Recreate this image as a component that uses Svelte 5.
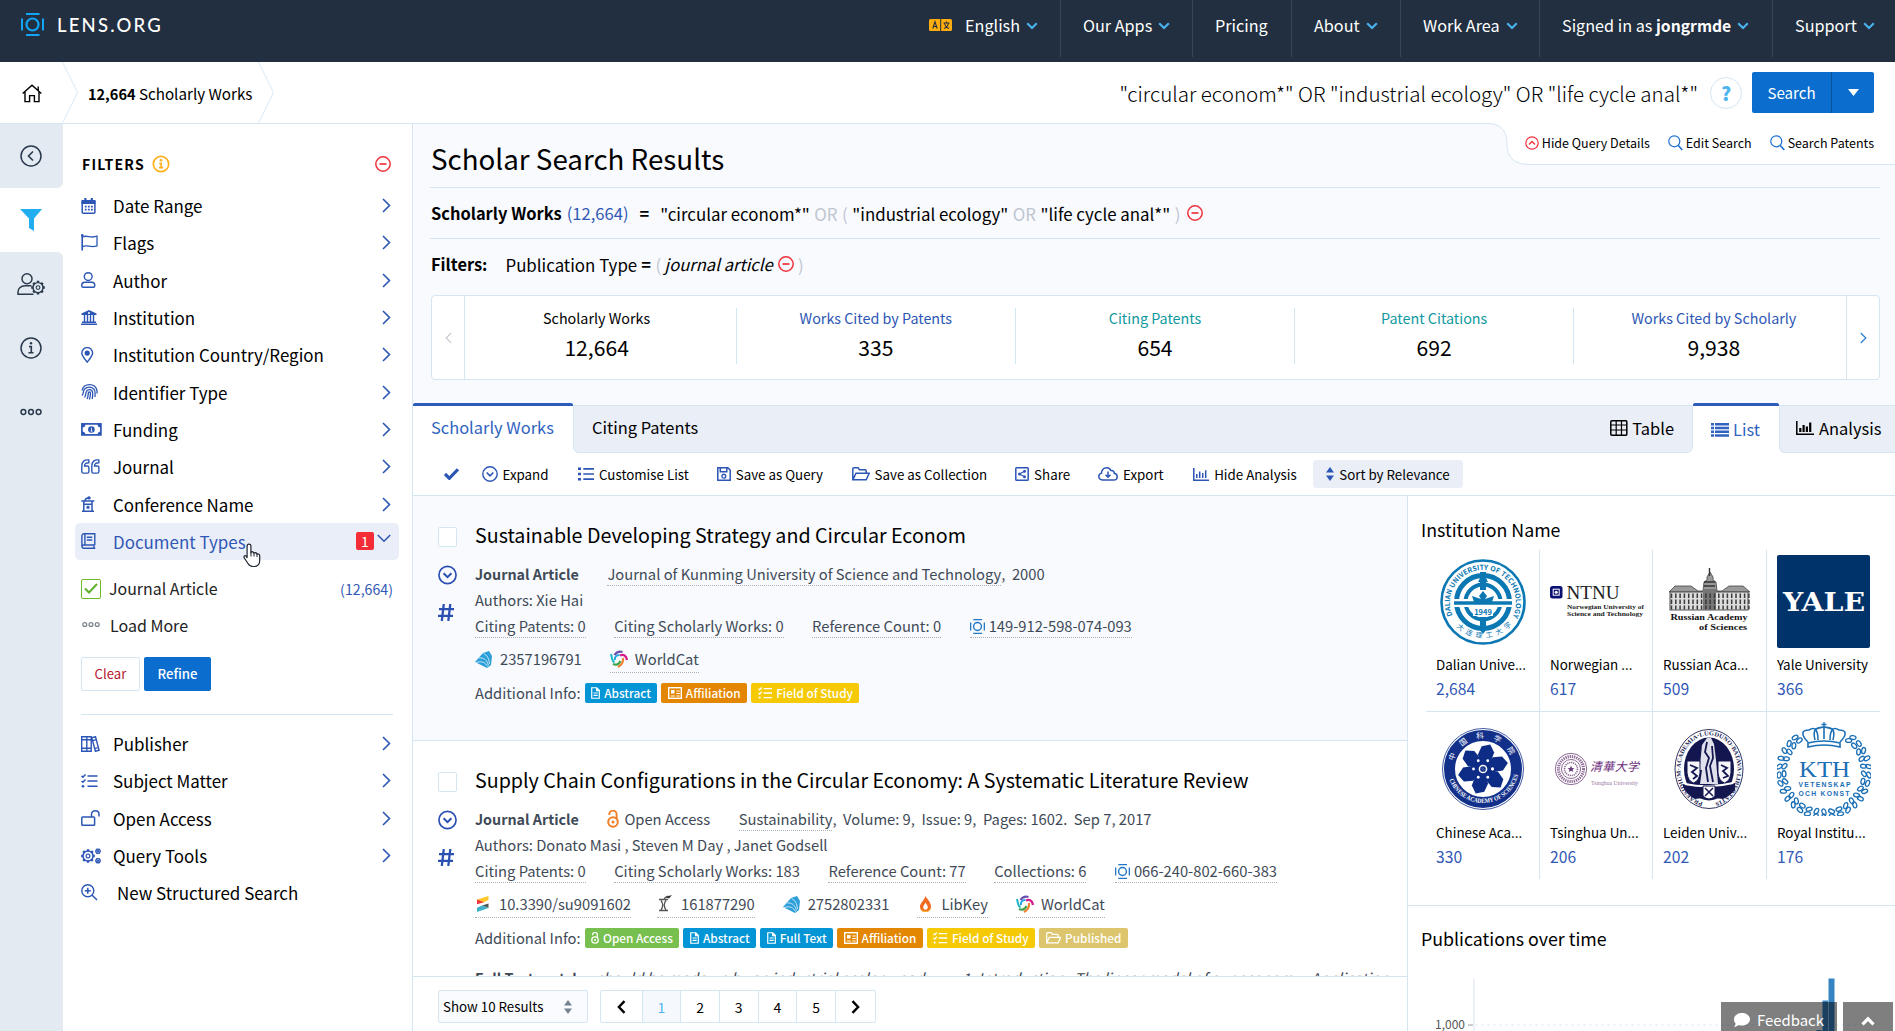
<script>
  // Icon bodies: [viewBox size, markup]. Strokes use currentColor.
  const gear = (cx, cy, r, n, sw = 1.3) => {
    let d = '';
    for (let i = 0; i < n; i++) {
      const a = (i / n) * Math.PI * 2;
      d += `M${cx + Math.cos(a) * r} ${cy + Math.sin(a) * r}L${cx + Math.cos(a) * (r + r * 0.36)} ${cy + Math.sin(a) * (r + r * 0.36)}`;
    }
    return `<path d="${d}" stroke-width="${r * 0.5}"/><circle cx="${cx}" cy="${cy}" r="${r}" stroke-width="${sw}"/><circle cx="${cx}" cy="${cy}" r="${r * 0.38}" stroke-width="${sw * 0.8}"/>`;
  };
  const F = 'fill="currentColor" stroke="none"';
  const icons = {
    lens: ['23 23', `<circle cx="11.5" cy="11.5" r="6" stroke-width="2.2"/><path d="M5 1.1h13.5M5 21.9h13.5M1 5.500v12M22 5.500v12" stroke-width="2"/>`],
    home: ['20 19', `<path d="M.7 9.600L10 1.200l9.300 8.400M3 8v9.600h4.600v-6h4.800v6H17V8M16.200 6.200V2.600" stroke-width="1.400"/>`],
    back: ['22 22', `<circle cx="11" cy="11" r="10"/><path d="M13 6.500L8.500 11l4.500 4.500" stroke-width="1.600"/>`],
    funnel: ['22 22', `<path ${F} d="M0 0h22l-8 9.500V22l-5-3V9.500z"/>`],
    usercog: ['28 22', `<circle cx="10" cy="5.800" r="5"/><path d="M14.500 12.800H8c-4 0-7 2.600-7 6.200v2.200h15.500"/>${gear(21, 14.6, 5, 8, 1.4)}`],
    info: ['22 22', `<circle cx="11" cy="11" r="10"/><path d="M9 9.600h2.300v6M8.500 15.800h5" stroke-width="1.600"/><circle ${F} cx="11" cy="6.300" r="1.200"/>`],
    dots: ['22 8', `<circle cx="3.400" cy="4" r="2.400"/><circle cx="11" cy="4" r="2.400"/><circle cx="18.600" cy="4" r="2.400"/>`],
    infobold: ['18 18', `<circle cx="9" cy="9" r="7.700" stroke-width="1.700"/><path d="M7.300 8.300h1.900v4M7 12.700h4.200" stroke-width="1.700"/><circle ${F} cx="9" cy="5.300" r="1.300"/>`],
    minus: ['16 16', `<circle cx="8" cy="8" r="7.200" stroke-width="1.500"/><path d="M4.500 8h7" stroke-width="1.700"/>`],
    calendar: ['16 16', `<path ${F} d="M.5 2h14v4H.5zM3.300 0h2.200v3H3.300zM9.700 0h2.200v3H9.700z"/><rect x="1.200" y="2.700" width="12.700" height="12.500" rx="1" stroke-width="1.500"/><path d="M3.800 8.700h8M3.800 11.600h8" stroke-width="1.800" stroke-dasharray="1.800 1.300"/>`],
    flag: ['17 17', `<path d="M1.200.5V16.500" stroke-width="1.600"/><circle ${F} cx="1.300" cy="1.400" r="1.300"/><path d="M1.500 3c5-2.500 7.500 1.800 14.500-.8v9.600c-7 2.600-9.500-1.700-14.500.8" stroke-width="1.300"/>`],
    user: ['15 16', `<circle cx="7.200" cy="4.600" r="3.900" stroke-width="1.400"/><path d="M3.600 10.200h7.200c2 0 3 1.400 3 3.300 0 1-.5 1.800-1.300 1.800H2c-.8 0-1.300-.8-1.300-1.800 0-1.900 1-3.300 2.900-3.300z" stroke-width="1.400"/>`],
    bank: ['16 15', `<path ${F} d="M8 0l7.500 3.500V5H.5V3.500zM0 13.500h16V15H0z"/><path d="M3.500 5v7M6.500 5v7M9.500 5v7M12.500 5v7M1 12.300h14" stroke-width="1.400"/><circle cx="8" cy="3" r="1" fill="#fff" stroke="none"/>`],
    pin: ['13 16', `<path d="M6.200 15.200C3.500 11.500.8 9 .8 6a5.400 5.400 0 0 1 10.800 0c0 3-2.700 5.500-5.400 9.200z" stroke-width="1.400"/><circle ${F} cx="6.200" cy="6.100" r="2.600"/>`],
    finger: ['17 16', `<path d="M1 6.500C2 2.500 5 .7 8.500.7S15 2.500 16 6.500v3M1 11.500c1.500-1 1-4.500 2.500-6.300C6 2.500 11 2.500 13.200 5.500c1 1.500 1 5 .8 7.500M3.500 13.500C5 12 4.600 9.500 5.200 8c1-3 5.500-3.200 6.300 0 .4 1.800.3 4.500-.3 7M6 15c1.400-2 1-4.500 1.400-6.200.4-1.200 1.900-1.200 2 .1.200 2.300-.2 4.600-1 6.700" stroke-width="1.300"/>`],
    money: ['21 13', `<rect x=".9" y=".9" width="19" height="11" stroke-width="1.700"/><path ${F} d="M1 1h3.500A3.500 3.500 0 0 1 1 4.500zM20 1v3.500A3.500 3.500 0 0 1 16.500 1zM1 12V8.500A3.500 3.500 0 0 1 4.500 12zM20 12h-3.500A3.500 3.500 0 0 1 20 8.500z"/><circle ${F} cx="10.400" cy="6.500" r="3.300"/><path d="M10.500 4.800v3.400M9.600 8.200h1.900" stroke="#fff" stroke-width=".8"/>`],
    quote: ['19 15', `<path d="M7.800 1C3.500.5.8 2.500.8 7v5.500c0 1 .5 1.600 1.500 1.600h4c1 0 1.600-.6 1.600-1.600V8.600c0-1-.6-1.600-1.600-1.600H3.500C3.500 4.800 5 3.700 7.800 3.800zM17.800 1c-4.300-.5-7 1.500-7 6v5.500c0 1 .5 1.600 1.500 1.600h4c1 0 1.600-.6 1.600-1.600V8.600c0-1-.6-1.600-1.600-1.600h-2.800c0-2.200 1.500-3.300 4.300-3.200z" stroke-width="1.400"/>`],
    podium: ['14 16', `<path d="M.3 4.900h13M2.800 5v9.500M11 5v9.500M1 15.200h12M3 8.300h8M4 4.500C4.300 2.600 5.500 2 7.500 2" stroke-width="1.500"/><circle ${F} cx="8" cy="1.900" r="1.700"/><path ${F} d="M7 9l.8 1.400 1.500.2-1.100 1.100.3 1.500L7 12.500l-1.500.7.300-1.500-1.100-1.100 1.500-.2z"/>`],
    book: ['15 16', `<path d="M13.800 12V.8H3C1.700.8.900 1.600.900 3v10c0 1.300.8 2.200 2.100 2.200h11.300M1 13.500C1 12.500 2 12 3 12h10.800M13 12v3M3.900 1v11M5.800 4.300h5.500M5.800 7h5.500" stroke-width="1.400"/>`],
    books: ['19 16', `<path d="M.7.8h5.100v14.400H.700zM5.800.8h4.400v14.400H5.800zM1 3.800h9M1 12.200h9M10.800 1.700l3.700-1 3.600 13.600-3.700 1zM11.600 4.600l3.700-1M14 12.400l3.700-1" stroke-width="1.400"/>`],
    tasks: ['17 14', `<path d="M.6 1.900l1.300 1.300L4.500.5M.6 7l1.300 1.300 2.600-2.700M6.500 2h10M6.500 7h10M6.500 12.300h10" stroke-width="1.500"/><circle ${F} cx="2" cy="12.300" r="1.300"/>`],
    unlock: ['19 16', `<rect x=".8" y="7" width="12.800" height="8.200" rx=".8" stroke-width="1.500"/><path d="M10.500 7V4.300C10.500 2.200 12 .8 14.200.8S18 2.200 18 4.300V6.500" stroke-width="1.500"/>`],
    cogs: ['21 16', `${gear(7, 8, 5, 8, 1.5)}${gear(17, 3.3, 2.1, 6, 1.3)}${gear(17, 12.7, 2.1, 6, 1.3)}`],
    zoomin: ['17 17', `<circle cx="6.800" cy="6.800" r="6" stroke-width="1.400"/><path d="M11.200 11.200l4.800 4.800M6.800 3.800v6M3.800 6.800h6" stroke-width="1.500"/>`],
    mag: ['15 16', `<circle cx="6.300" cy="6.300" r="5.500" stroke-width="1.200"/><path d="M10.300 10.500l4 4.500" stroke-width="1.600"/>`],
    upcirc: ['14 14', `<circle cx="7" cy="7" r="6.200" stroke-width="1.200"/><path d="M4 8.500l3-3 3 3" stroke-width="1.400"/>`],
    right: ['9 15', `<path d="M1 1l6.500 6.500L1 14" stroke-width="1.600"/>`],
    left: ['9 15', `<path d="M8 1L1.500 7.500 8 14" stroke-width="1.500"/>`],
    down: ['14 9', `<path d="M.8 1l6.200 6.200L13.200 1" stroke-width="1.600"/>`],
    navdown: ['12 8', `<path d="M1.200 1.200L6 6l4.800-4.800" stroke-width="2.100"/>`],
    check: ['15 12', `<path d="M1 6l4.300 4.300L14 1.300" stroke-width="3.200"/>`],
    expand: ['16 16', `<circle cx="8" cy="8" r="7.200" stroke-width="1.400"/><path d="M4.700 6.500L8 9.800l3.300-3.300" stroke-width="1.700"/>`],
    listdots: ['16 14', `<path d="M0 1.800h3M0 7h3M0 12.200h3" stroke-width="2.600"/><path d="M5.300 1.800H16M5.300 7H16M5.300 12.200H16" stroke-width="1.700"/>`],
    save: ['14 14', `<path d="M.8.800h10l2.400 2.200v10.200H.8zM3.300 1v3.800h6.500V1" stroke-width="1.500"/><circle cx="6.800" cy="9.200" r="1.900" stroke-width="1.400"/>`],
    folder: ['18 14', `<path d="M.8 12.500V2c0-.7.400-1.200 1.200-1.200h4l1.500 2H13c.8 0 1.200.5 1.200 1.200v2M.8 12.800L4 6.200h13.200l-3 6.600z" stroke-width="1.500"/>`],
    share: ['14 14', `<rect x=".8" y=".8" width="12.400" height="12.400" rx=".8" stroke-width="1.500"/><path d="M9.500 4.300L4.500 7l5 2.700" stroke-width="1.100"/><circle ${F} cx="9.500" cy="4.300" r="1.500"/><circle ${F} cx="4.500" cy="7" r="1.500"/><circle ${F} cx="9.500" cy="9.700" r="1.500"/>`],
    cloud: ['20 14', `<path d="M5 13C2.500 13 .8 11.500.8 9.500c0-1.800 1.200-3 2.700-3.400C3.500 3 5.800.8 8.500.8c2.200 0 3.600 1 4.300 2.700C15 3.200 16.300 4.600 16.300 6.300 18 6.700 19.200 8 19.200 9.700c0 2-1.500 3.300-3.500 3.300zM10 4.500v5.500M7.500 7.800L10 10.300l2.500-2.500" stroke-width="1.500"/>`],
    bars: ['16 13', `<path d="M.8 0v12.200H16" stroke-width="1.500"/><path d="M3.800 10V6M6.700 10V3.500M9.700 10V5M12.700 10V2.200" stroke-width="1.500"/>`],
    barsbold: ['18 14', `<path d="M.8 0v13.200H18" stroke-width="1.500"/><path d="M4.300 11V7M7.600 11V4M10.900 11V5.500M14.200 11V1.500" stroke-width="2.200"/>`],
    sort: ['8 14', `<path ${F} d="M4 0l4 5.500H0zM4 14L0 8.500h8z"/>`],
    table: ['18 16', `<rect x=".8" y=".8" width="16" height="14.400" rx="1" stroke-width="1.500"/><path d="M1 5h16M1 10h16M6.200 1v14M11.500 1v14" stroke-width="1.200"/>`],
    list: ['18 14', `<path d="M0 1.200h3M0 5h3M0 8.800h3M0 12.600h3M4 1.200h14M4 5h14M4 8.800h14M4 12.600h14" stroke-width="2.500"/>`],
    hash: ['16 17', `<path d="M5.800 0L3.800 17M12.300 0l-2 17M1 5.200h15M0 11.800h15" stroke-width="2.300"/>`],
    oa: ['12 18', `<circle cx="6" cy="12" r="4.800" stroke-width="2"/><circle ${F} cx="6" cy="12" r="1.500"/><path d="M2.300 5V4.300a3.600 3.600 0 0 1 7.300 0V9" stroke-width="1.900"/>`],
    doc: ['10 13', `<path d="M.8.8h5.400L9 3.600v8.600H.8zM6 1v3h3M2.700 6.500h4.600M2.700 9h4.600" stroke-width="1.300"/>`],
    card: ['14 12', `<rect x=".7" y=".7" width="12.600" height="10.600" stroke-width="1.400"/><path d="M2.800 9h4M8.300 4h3.500M8.300 6.500h3.500M8.300 9h3.500" stroke-width="1.200"/><path ${F} d="M3 3h3.500v3.500H3z"/>`],
    chat: ['16 14', `<path ${F} d="M8 0c4.500 0 8 2.700 8 6.200s-3.500 6.300-8 6.300c-1.200 0-2.300-.2-3.300-.6C3.500 13 1.800 13.800 0 13.800c.8-.8 1.500-2 1.600-3.200C.6 9.400 0 7.900 0 6.200 0 2.700 3.500 0 8 0z"/>`],
    up: ['14 10', `<path d="M1.500 8.300L7 2.800l5.500 5.500" stroke-width="3.200"/>`],
    pgleft: ['9 14', `<path d="M7.500 1.200L1.900 7l5.600 5.800" stroke-width="2.400"/>`],
    pgright: ['9 14', `<path d="M1.500 1.200L7.100 7l-5.600 5.800" stroke-width="2.400"/>`],
    msacad: ['18 17', `<path fill="#2c9fd9" stroke="none" d="M0 11l8-9 6-2 3 5-1 9-4 3z"/><path stroke="#e8f5fc" stroke-width=".8" d="M1 11.500C7 10 10 11 12.500 15.500M4 7c5-.5 8 2 9.500 7.500M8.500 2.500c3.500 1.500 5.500 5 6 10.500"/>`],
    worldcat: ['18 18', `<path d="M9.500 5C6 5 4.500 7 5 10" stroke="#21a8e0" stroke-width="2"/><path d="M1 4c1 4.500 1 7 3.500 8.500" stroke="#1fb6c8" stroke-width="2"/><path d="M4.500 5C6.500 2 9 1 12.500 2" stroke="#6c4fb0" stroke-width="2.200"/><path d="M10 5.500c3.500-1.500 6.300 0 7 4.500" stroke="#d61c8b" stroke-width="2.200"/><path d="M13 8c.5 4-1.500 7-5 9" stroke="#f08030" stroke-width="2.200"/><path d="M3 14c3 1.500 6 .5 7.500-3" stroke="#3fa54a" stroke-width="2.200"/>`],
    crossref: ['12 16', `<path fill="#ffc72c" stroke="none" d="M0 3.500L11.500 0v4L5 7z"/><path fill="#ef3340" stroke="none" d="M0 3.500v4.800L7 6.300z"/><path fill="#4f5858" stroke="none" d="M11.500 7.500v4.600L5 9.400z"/><path fill="#3eb1c8" stroke="none" d="M0 16v-4.300l5-2.300 6.500 2.700z"/>`],
    core: ['15 17', `<path stroke="#555" stroke-width="1.300" d="M2 4.500h9M2 15.500h9M4 5.500c2 2.500 2 6.500 0 9.500M9 5.500c-2 2.500-2 6.500 0 9.500M7 3.500L11 1"/><path fill="#333" stroke="none" d="M8 2l7-2-3 3.500z"/>`],
    fire: ['11 16', `<path fill="#f06a22" stroke="none" d="M5.500 0C7 3 11 6 11 10.500 11 14 8.500 16 5.500 16S0 14 0 10.500C0 7 4.500 4 5.500 0z"/><path fill="#f9b233" stroke="none" d="M0 11c1 3 3 4 5.500 4S10 14 11 11c0 3.500-2.500 5-5.500 5S0 14.500 0 11z"/><path fill="#fff" stroke="none" d="M5.500 6.500c.8 1.800 2.300 2.800 2.300 4.800 0 1.500-1 2.400-2.300 2.400s-2.300-.9-2.300-2.400c0-2 1.700-3 2.300-4.800z"/>`],
    az: ['23 12', `<rect width="23" height="12" rx="1.500" fill="#fdae0d" stroke="none"/><path d="M11.700 0v12" stroke="#212f40" stroke-width="1"/><path d="M3.800 9.500L6 2.800l2.200 6.700M4.500 7.500h3M14.500 4h6M17.500 2.500V4M19.500 4c-.5 2.500-2 4.500-4.500 5.500M15.500 4c.5 2.500 2 4.500 4.500 5.500" stroke="#212f40" stroke-width="1.100"/>`]
  };

  const nav = [
    { t: 'Our Apps', w: 132, c: true }, { t: 'Pricing', w: 99 }, { t: 'About', w: 109, c: true },
    { t: 'Work Area', w: 139, c: true }, { t: 'Signed in as ', b: 'jongrmde', w: 233, c: true }, { t: 'Support', w: 123, c: true }
  ];
  const filters = [
    ['calendar', 'Date Range'], ['flag', 'Flags'], ['user', 'Author'], ['bank', 'Institution'],
    ['pin', 'Institution Country/Region'], ['finger', 'Identifier Type'], ['money', 'Funding'],
    ['quote', 'Journal'], ['podium', 'Conference Name']
  ];
  const filters2 = [['books', 'Publisher'], ['tasks', 'Subject Matter'], ['unlock', 'Open Access'], ['cogs', 'Query Tools']];
  const stats = [
    ['Scholarly Works', '12,664', ''], ['Works Cited by Patents', '335', 'blue'], ['Citing Patents', '654', 'teal'],
    ['Patent Citations', '692', 'teal'], ['Works Cited by Scholarly', '9,938', 'blue']
  ];
  const tools = [
    ['expand', 'Expand', 22.5], ['listdots', 'Customise List', 29.5], ['save', 'Save as Query', 28], ['folder', 'Save as Collection', 28.5],
    ['share', 'Share', 28], ['cloud', 'Export', 28], ['bars', 'Hide Analysis', 29.5]
  ];
  const tag = { abs: ['doc', 'Abstract', 'tblue'], full: ['doc', 'Full Text', 'tblue'], aff: ['card', 'Affiliation', 'torange'], fos: ['tasks', 'Field of Study', 'tyellow'], oa: ['oa', 'Open Access', 'tgreen'], pub: ['folder', 'Published', 'tgold'] };
  const results = [
    {
      title: 'Sustainable Developing Strategy and Circular Econom', source: 'Journal of Kunming University of Science and Technology', rest: ',  2000',
      authors: 'Authors: Xie Hai', counts: ['Citing Patents: 0', 'Citing Scholarly Works: 0', 'Reference Count: 0'], id: '149-912-598-074-093',
      ids: [['msacad', '2357196791', false], ['worldcat', 'WorldCat', true]], tags: [tag.abs, tag.aff, tag.fos]
    },
    {
      title: 'Supply Chain Configurations in the Circular Economy: A Systematic Literature Review', oa: true, source: 'Sustainability', rest: ',  Volume: 9,  Issue: 9,  Pages: 1602.  Sep 7, 2017',
      authors: 'Authors: Donato Masi , Steven M Day , Janet Godsell', counts: ['Citing Patents: 0', 'Citing Scholarly Works: 183', 'Reference Count: 77', 'Collections: 6'], id: '066-240-802-660-383',
      ids: [['crossref', '10.3390/su9091602', true], ['core', '161877290', true], ['msacad', '2752802331', false], ['fire', 'LibKey', true], ['worldcat', 'WorldCat', true]],
      tags: [tag.oa, tag.abs, tag.full, tag.aff, tag.fos, tag.pub], match: true
    }
  ];
  const insts = [
    ['dalian', 'Dalian Unive...', '2,684'], ['ntnu', 'Norwegian ...', '617'], ['ras', 'Russian Aca...', '509'], ['yale', 'Yale University', '366'],
    ['cas', 'Chinese Aca...', '330'], ['tsinghua', 'Tsinghua Un...', '206'], ['leiden', 'Leiden Univ...', '202'], ['kth', 'Royal Institu...', '176']
  ];
  const ring = (n, r, cx, cy, from = 0, to = 360) => Array.from({ length: n }, (_, i) => {
    const a = ((from + ((to - from) * i) / (n - 1)) * Math.PI) / 180;
    return [cx + Math.cos(a) * r, cy + Math.sin(a) * r];
  });
  const wreath = [...ring(27, 40, 47, 50, -52, 232), ...ring(27, 45, 47, 50, -50, 230)];
  const windows = Array.from({ length: 19 }, (_, i) => 8.5 + i * 4.3);
</script>

{#snippet icon(name, cls = '')}
  {@const [w, h] = icons[name][0].split(' ')}
  <svg class="ico {cls}" width={w} height={h} viewBox="0 0 {w} {h}" fill="none" stroke="currentColor" stroke-width="1.5">{@html icons[name][1]}</svg>
{/snippet}

{#snippet logo(k)}
  <svg class="logo" width="94" height="94" viewBox="0 0 94 94">
    {#if k === 'dalian'}
      <g fill="none" stroke="#0b78b3">
        <circle cx="47" cy="47" r="41.500" stroke-width="2.600" />
        <circle cx="47" cy="47" r="26.500" stroke-width="5" />
        <circle cx="47" cy="47" r="17.500" stroke-width="4" />
        <path d="M42 27l5-10 5 10zM41 71l6 8 6-8z" fill="#0b78b3" stroke="none" />
        <path d="M18 48h58" stroke="#fff" stroke-width="8" />
        <path d="M18 48h58" stroke-width="3.500" />
        <path d="M47 17v18M47 62v12" stroke-width="6" />
      </g>
      <rect x="37" y="51" width="20" height="10" fill="#fff" />
      <path d="M47 36l4 5-2 3 6-2 3-1-2 6-6 2h-6l-6-2-2-6 3 1 6 2-2-3z" fill="#0b78b3" />
      <text x="47" y="59.500" class="lt" font-size="7.500" font-weight="700" fill="#0b78b3" text-anchor="middle">1949</text>
      <path id="p-dal" d="M16.500 60.500A33 33 0 1 1 77.500 60.500" fill="none" />
      <text class="lt" font-size="7" font-weight="700" fill="#0b78b3"><textPath href="#p-dal" textLength="131" lengthAdjust="spacing">DALIAN UNIVERSITY OF TECHNOLOGY</textPath></text>
      <path id="p-dal2" d="M17 68A37.500 37.500 0 0 0 77 68" fill="none" />
      <text class="lt" font-size="7" fill="#0b78b3"><textPath href="#p-dal2" startOffset="5" textLength="62">大连理工大学</textPath></text>
    {:else if k === 'ntnu'}
      <rect x="0" y="31" width="12.500" height="12.500" rx="2.500" fill="#0a1172" />
      <rect x="3.200" y="34.200" width="6" height="6" fill="none" stroke="#fff" stroke-width="1" />
      <circle cx="6.200" cy="37.200" r="1.500" fill="#fff" />
      <g class="serif" fill="#222">
        <text x="16.500" y="43.500" font-size="18" textLength="53" lengthAdjust="spacingAndGlyphs">NTNU</text>
        <text x="17" y="53.500" font-size="6.800" font-weight="700" textLength="77" lengthAdjust="spacingAndGlyphs">Norwegian University of</text>
        <text x="17" y="61" font-size="6.800" font-weight="700" textLength="76" lengthAdjust="spacingAndGlyphs">Science and Technology</text>
      </g>
    {:else if k === 'ras'}
      <path d="M6 37l6-6h16l7 5h5l1-9 3-2v-3l3-5 3 5v3l3 2 1 9h5l7-5h14l7 6z" fill="#9a9a9a" stroke="#444" stroke-width=".8" />
      <rect x="7" y="37" width="78" height="18" fill="#ddd" stroke="#444" stroke-width=".9" />
      <path d="M46.500 13v8M41 27h11M41 31h11" stroke="#333" stroke-width="1.400" />
      <rect x="40" y="34" width="13" height="21" fill="#777" />
      <g stroke="#3a3a3a" stroke-width="1.500">
        {#each windows as x}<path d="M{x} 38.500v4.500M{x} 44.500v4.500M{x} 50.500v4" />{/each}
      </g>
      <g class="serif" fill="#111" font-weight="700" text-anchor="end" font-size="8.500">
        <text x="84.500" y="64.500" textLength="77" lengthAdjust="spacingAndGlyphs">Russian Academy</text>
        <text x="84" y="74.500" textLength="48" lengthAdjust="spacingAndGlyphs">of Sciences</text>
      </g>
    {:else if k === 'yale'}
      <rect width="93" height="93" rx="2" fill="#003369" />
      <text class="slab" x="6" y="56" font-size="26" font-weight="700" fill="#fff" textLength="82" lengthAdjust="spacingAndGlyphs">YALE</text>
    {:else if k === 'cas'}
      <circle cx="47" cy="47" r="40.500" fill="#fff" stroke="#12308a" stroke-width=".8" />
      <circle cx="47" cy="47" r="33.500" fill="none" stroke="#12308a" stroke-width="11" />
      <g fill="#0d2c86">
        {#each [0, 60, 120, 180, 240, 300] as a}<path transform="rotate({a + 12} 47 47)" d="M47 47l-8-13 2-9 8-3.500 5.500 7-1.500 10z" />{/each}
      </g>
      <circle cx="47" cy="47" r="3.600" fill="none" stroke="#fff" stroke-width="1.500" />
      {#each ring(7, 9.5, 47, 47) as p}<circle cx={p[0]} cy={p[1]} r="1.400" fill="#fff" />{/each}
      <path id="p-cas" d="M11.500 51A36 36 0 0 0 82.500 51" fill="none" />
      <text class="serif" font-size="6.500" font-weight="700" fill="#fff"><textPath href="#p-cas" startOffset="7" textLength="92" lengthAdjust="spacingAndGlyphs">CHINESE ACADEMY OF SCIENCES</textPath></text>
      <path id="p-cas2" d="M17.500 39A30.500 30.500 0 0 1 76.500 39" fill="none" />
      <text class="lt" font-size="7.500" fill="#fff"><textPath href="#p-cas2" textLength="74">中国科学院</textPath></text>
    {:else if k === 'tsinghua'}
      <g fill="none" stroke="#8d6b96">
        <circle cx="21" cy="47" r="15.700" stroke-width="1" />
        <circle cx="21" cy="47" r="12.500" stroke-width="3" stroke-dasharray="1.300 .9" />
        <circle cx="21" cy="47" r="9.500" stroke-width="1" />
        <circle cx="21" cy="47" r="6.500" stroke-width="1.600" stroke-dasharray="1.200 .8" />
      </g>
      <path d="M21 43.800l1 2.200 2.300.2-1.700 1.500.6 2.300-2.200-1.200-2.200 1.200.6-2.300-1.700-1.500 2.300-.2z" fill="#6b3a7a" />
      <text class="lt" x="40" y="49" font-size="12" fill="#6c2f7c" font-style="italic" textLength="49" lengthAdjust="spacing">清華大学</text>
      <text class="serif" x="41" y="62.500" font-size="6" fill="#97799f" textLength="47" lengthAdjust="spacingAndGlyphs">Tsinghua University</text>
    {:else if k === 'leiden'}
      <ellipse cx="46" cy="47" rx="34" ry="39.500" fill="none" stroke="#1b1e54" stroke-width=".9" />
      <ellipse cx="46" cy="47" rx="25" ry="31.500" fill="#14174f" />
      <path d="M20 62q26 8 52-1v7q-5 6-12 9l-8-1v-8H40v8l-8 1q-8-4-12-12z" fill="#14174f" />
      <path d="M28 43h9l2-20 5-7h4l3 6 2 16 2 24H37l2-14H28z" fill="#dfe0ec" />
      <path d="M24 39h13v12q-1 8-6.500 10Q25 59 24 51zM55 39h13v12q-1 8-6.500 10Q56 59 55 51z" fill="#f5f5fa" stroke="#14174f" />
      <path d="M27 43l7 3-5 4 5 4-4 3M58 43l6 3-4 3 5 5-5 2M44 20l-2 10 4 6-3 10 2 14M49 24l1 12-3 8 3 16" fill="none" stroke="#14174f" stroke-width="1.800" />
      <path d="M22 62q24 5 48-1" fill="none" stroke="#fff" stroke-width="2" />
      <path d="M40 64h12v10q-6 6-12 0z" fill="#fff" stroke="#14174f" /><path d="M42 66l8 8M50 66l-8 8" stroke="#14174f" stroke-width="1.500" />
      <path id="p-lei" d="M40 80.500A28.500 34 0 1 1 52 80.500" fill="none" />
      <text class="serif" font-size="6" font-weight="700" fill="#1b1e54"><textPath href="#p-lei" textLength="184" lengthAdjust="spacingAndGlyphs">PRAESIDIUM·ACADEMIA·LUGDUNO·BATAVA·LIBERTATIS</textPath></text>
    {:else}
      <g fill="none" stroke="#1b6fb5" stroke-width="1.300">
        {#each wreath as p, i}<ellipse transform="rotate({i * 47} {p[0]} {p[1]})" cx={p[0]} cy={p[1]} rx="3.100" ry="1.900" />{/each}
        <path d="M31 21q16-4 32 0v4q-16-4-32 0zM31 20c-8-8-6-12 1-12 6-4 9 0 9 10M63 20c8-8 6-12-1-12-6-4-9 0-9 10M47 17V5M38 18c-3-12 2-12 9-13 7 1 12 1 9 13" stroke-width="1.600" />
        <path d="M47 0v5M44.500 2.500h5" />
      </g>
      <g fill="#1b6fb5">
        <text class="serif" x="22" y="54.500" font-size="23" textLength="51" lengthAdjust="spacingAndGlyphs">KTH</text>
        <text class="lib" x="21.500" y="65" font-size="6.800" font-weight="700" textLength="52" lengthAdjust="spacing">VETENSKAP</text>
        <text class="lib" x="21.500" y="74" font-size="6.800" font-weight="700" textLength="51" lengthAdjust="spacing">OCH KONST</text>
      </g>
    {/if}
  </svg>
{/snippet}

<div class="app">
  <header>
    <div class="brand">{@render icon('lens')}<span>LENS.ORG</span></div>
    <nav>
      <div class="ni first">{@render icon('az', 'az')}<span>English</span>{@render icon('navdown', 'nd')}</div>
      {#each nav as n}
        <div class="ni" style="width:{n.w}px"><span>{n.t}{#if n.b}<b>{n.b}</b>{/if}</span>{#if n.c}{@render icon('navdown', 'nd')}{/if}</div>
      {/each}
    </nav>
  </header>

  <div class="crumbs">
    <div class="home">{@render icon('home')}</div>
    <svg class="sep" width="16" height="61" viewBox="0 0 16 61"><path d="M.5 0l15 30.500-15 30.500" fill="none" stroke="#d9e8f5" /></svg>
    <div class="crumb"><b>12,664</b> Scholarly Works</div>
    <svg class="sep" width="16" height="61" viewBox="0 0 16 61"><path d="M.5 0l15 30.500-15 30.500" fill="none" stroke="#d9e8f5" /></svg>
    <div class="query">"circular econom*" OR "industrial ecology" OR "life cycle anal*"</div>
    <div class="help">?</div>
    <div class="searchbtn"><span>Search</span><i><svg width="11" height="7" viewBox="0 0 11 7"><path d="M0 0h11L5.500 7z" fill="#fff" /></svg></i></div>
  </div>

  <div class="cols">
    <aside class="rail">
      <div class="cell top">{@render icon('back')}</div>
      <div class="cell on">{@render icon('funnel')}</div>
      <div class="rest">
        <div class="cell">{@render icon('usercog')}</div>
        <div class="cell">{@render icon('info')}</div>
        <div class="cell">{@render icon('dots')}</div>
      </div>
    </aside>

    <section class="filters">
      <div class="fh"><b>FILTERS</b>{@render icon('infobold', 'amber')}{@render icon('minus', 'red end')}</div>
      {#each filters as f}
        <div class="fr"><span class="fi">{@render icon(f[0])}</span><span>{f[1]}</span>{@render icon('right', 'end')}</div>
      {/each}
      <div class="fr active"><span class="fi">{@render icon('book')}</span><span>Document Types</span><em>1</em>{@render icon('down', 'dn')}
        <svg class="cursor" width="20" height="25" viewBox="0 0 20 25"><path d="M7 1.200c1.200 0 1.900.8 1.900 2V9.500l1-.8c1 0 1.700.5 2 1.300l1.400-.4c.9.100 1.500.6 1.700 1.400 1.600-.3 2.700.4 2.700 2v4.500c0 3.500-2 6-5.700 6h-1.200c-2.300 0-3.600-1-4.800-3l-3.700-5.500c-1-1.500.8-3 2.200-1.800L5.100 15V3.200c0-1.200.7-2 1.900-2z" fill="#fff" stroke="#1d2430" stroke-width="1.200" /><path d="M9 9.500v4M12 10v3.500M15 11v3" stroke="#1d2430" /></svg>
      </div>
      <div class="ja"><span class="cb"><svg width="14" height="11" viewBox="0 0 14 11"><path d="M1 5.500l4 4L13 1" fill="none" stroke="#5fb02c" stroke-width="2" /></svg></span><span>Journal Article</span><small>(12,664)</small></div>
      <div class="lm">{@render icon('dots', 'gray')}<span>Load More</span></div>
      <div class="btns"><span class="clear">Clear</span><span class="refine">Refine</span></div>
      <div class="hr"></div>
      {#each filters2 as f}
        <div class="fr"><span class="fi">{@render icon(f[0])}</span><span>{f[1]}</span>{@render icon('right', 'end')}</div>
      {/each}
      <div class="fr"><span class="fi wide">{@render icon('zoomin')}</span><span>New Structured Search</span></div>
    </section>

    <main>
      <div class="mh">
        <h1>Scholar Search Results</h1>
        <div class="qr"><b>Scholarly Works</b><a class="cnt">(12,664)</a><b class="eq">=</b><span>"circular econom*"</span><s>OR</s><s>(</s><span>"industrial ecology"</span><s>OR</s><span>"life cycle anal*"</span><s>)</s>{@render icon('minus', 'red')}</div>
        <div class="qf"><b>Filters:</b><span class="pt">Publication Type</span><b>=</b><s>(</s><i>journal article</i>{@render icon('minus', 'red')}<s>)</s></div>
        <div class="stats">
          <div class="pg off">{@render icon('left')}</div>
          <div class="cells">
            {#each stats as s}
              <div class="stat"><span class={s[2]}>{s[0]}</span><strong>{s[1]}</strong></div>
            {/each}
          </div>
          <div class="pg">{@render icon('right')}</div>
        </div>
      </div>

      <div class="tabs">
        <div class="tab on">Scholarly Works</div>
        <div class="tab mid"><span>Citing Patents</span><span class="tb">{@render icon('table')}Table</span></div>
        <div class="tab on lst">{@render icon('list')}List</div>
        <div class="tab last">{@render icon('barsbold')}Analysis</div>
      </div>

      <div class="tools">
        {@render icon('check', 'blue')}
        {#each tools as t}
          <span class="tool" style="margin-left:{t[2]}px">{@render icon(t[0], 'blue')}{t[1]}</span>
        {/each}
        <span class="sortby">{@render icon('sort', 'blue')}Sort by Relevance</span>
      </div>

      <div class="body">
        <div class="left">
          <div class="results">
            {#each results as r, i}
              <article class:alt={i === 0}>
                <div class="side"><span class="box"></span>{@render icon('expand', 'ex')}{@render icon('hash', 'hs')}</div>
                <div class="info">
                  <h2>{r.title}</h2>
                  <div class="row"><b>Journal Article</b>{#if r.oa}<span class="oa">{@render icon('oa', 'orange')}Open Access</span>{/if}<span class="src"><span class="u">{r.source}</span>{r.rest}</span></div>
                  <div class="row">{r.authors}</div>
                  <div class="row">{#each r.counts as c}<span class="u">{c}</span>{/each}<span class="u lid">{@render icon('lens', 'lensico')}{r.id}</span></div>
                  <div class="row ids">{#each r.ids as d}<span class="xid {d[0]}" class:u={d[2]}>{@render icon(d[0])}{d[1]}</span>{/each}</div>
                  <div class="row tags"><span class="al">Additional Info:</span>{#each r.tags as t}<span class="tag {t[2]}">{@render icon(t[0])}{t[1]}</span>{/each}</div>
                  {#if r.match}<div class="row match"><b>Full Text match:</b><i>should be made up by an industrial ecology park</i><i class="m1">1. Introduction</i><i class="m2">The linear model of our economy</i><i class="m3">Application</i></div>{/if}
                </div>
              </article>
            {/each}
          </div>
          <footer>
            <div class="select"><span>Show 10 Results</span>{@render icon('sort')}</div>
            <div class="pager"><span class="w">{@render icon('pgleft')}</span><span class="cur">1</span><span>2</span><span>3</span><span>4</span><span>5</span><span class="w">{@render icon('pgright')}</span></div>
          </footer>
        </div>
        <aside class="right">
          <h3>Institution Name</h3>
          <div class="grid">
            {#each insts as n}
              <div class="inst">{@render logo(n[0])}<span>{n[1]}</span><a>{n[2]}</a></div>
            {/each}
          </div>
          <h3 class="pub">Publications over time</h3>
          <svg class="chart" width="487" height="56" viewBox="0 0 487 56">
            <path d="M66 4v52" stroke="#ecf0f8" stroke-width="2" />
            <path d="M60 50h5" stroke="#999" /><path d="M67 50h385" stroke="#e6e8f2" stroke-dasharray="3 3" />
            <text x="57" y="54" text-anchor="end">1,000</text>
            <path d="M420.500 3.500h6V56h-6zM414.500 25.500h5.500V56h-5.500zM408.500 55h5V56h-5z" fill="#3583c2" />
          </svg>
        </aside>
      </div>
    </main>
  </div>

  <div class="corner">
    <svg width="408" height="42" viewBox="0 0 408 42"><path d="M0 0H408V41H42C27 41 20 34 20 21 20 6 12 .5 0 .5z" fill="#fff" /><path d="M0 .5C12 .5 20 6 20 21 20 34 27 41.500 42 41.500H408" fill="none" stroke="#d5e6f3" /></svg>
    <div class="links"><span>{@render icon('upcirc', 'red')}Hide Query Details</span><span>{@render icon('mag', 'mg')}Edit Search</span><span>{@render icon('mag', 'mg')}Search Patents</span></div>
  </div>
  <div class="float"><span class="fb">{@render icon('chat')}Feedback</span><span class="upb">{@render icon('up')}</span></div>
</div>

<style>
  :global(body) { margin: 0; overflow: hidden; }
  .app { position: relative; width: 1895px; height: 1031px; overflow: hidden; background: #fff; color: #000; font-family: 'Noto Sans CJK SC', 'Open Sans', sans-serif; display: flex; flex-direction: column; white-space: nowrap; }
  .app * { box-sizing: border-box; }
  .ico { display: block; flex: none; }
  .red { color: #f0323c; }
  .blue { color: #2c56b5; }
  .teal { color: #0f98a0; }
  .orange { color: #ee7f26; }
  .end { margin-left: auto; }

  header { height: 62px; background: #212f40; color: #fff; display: flex; flex: none; }
  .brand { display: flex; gap: 13px; padding: 13px 0 0 21px; align-items: flex-start; color: #12a5f4; }
  .brand span { color: #fff; font: 500 18.500px/24px 'Lato', sans-serif; letter-spacing: 2.200px; }
  nav { margin-left: auto; display: flex; }
  .ni { height: 57px; padding: 0 0 7px 22px; border-left: 1px solid #384655; display: flex; align-items: center; font-size: 16.200px; gap: 6px; }
  .ni span { white-space: pre; }
  .ni.first { border: 0; width: 131px; padding-left: 0; }
  .ni :global(.az) { margin-right: 7px; }
  .ni :global(.nd) { color: #4ab3ee; margin-top: 2px; }
  .ni b { font-size: 15.700px; }

  .crumbs { height: 62px; border-bottom: 1px solid #d5e6f3; display: flex; align-items: center; flex: none; }
  .home { width: 62px; padding: 2px 0 0 22px; }
  .sep { flex: none; }
  .crumb { width: 180px; padding-left: 10px; font-size: 15.200px; }
  .crumb b { font-size: 14.500px; }
  .query { margin-left: auto; font-size: 20.540px; font-weight: 300; }
  .help { width: 32px; height: 32px; margin: 0 10px 0 12px; border: 1px solid #d5e6f3; border-radius: 50%; color: #4db4ee; font-weight: 900; font-size: 19px; line-height: 29px; text-align: center; }
  .searchbtn { width: 122px; height: 41px; margin-right: 21px; background: #0b6ecf; border-radius: 2px; color: #fff; display: flex; font-size: 15.100px; line-height: 40px; }
  .searchbtn span { width: 79px; text-align: center; }
  .searchbtn i { flex: 1; border-left: 1px solid #0a5297; display: flex; align-items: center; justify-content: center; }

  .cols { flex: 1; display: flex; min-height: 0; }
  .rail { width: 63px; flex: none; display: flex; flex-direction: column; color: #2a3a4c; }
  .cell { height: 64px; display: flex; align-items: center; justify-content: center; padding-right: 1px; }
  .cell.top { background: #e3eaf2; border-bottom-right-radius: 6px; }
  .cell.on { color: #22aeee; }
  .rest { flex: 1; background: #e3eaf2; border-top-right-radius: 6px; }

  .filters { width: 350px; flex: none; border-right: 1px solid #d5e6f3; padding: 30px 19px 0 12px; font-size: 16.950px; }
  .fh { height: 19px; margin: 0 2px 14px 7px; display: flex; align-items: center; }
  .fh b { width: 70px; font-size: 14px; font-weight: 700; letter-spacing: 1.200px; }
  .fh :global(.amber) { color: #fdb11e; }
  .fr { height: 37.300px; display: flex; align-items: center; padding: 0 3px 0 6px; border-radius: 5px; position: relative; margin-right: -6px; }
  .fr :global(.end) { color: #2c56b5; margin-right: 5px; }
  .fi { width: 32px; color: #2c56b5; }
  .fi.wide { width: 36px; }
  .fr.active { background: #eaeef8; color: #3158b5; }
  .fr em { margin-left: auto; width: 18px; height: 18px; background: #f42c37; border-radius: 2px; color: #fff; font: 14px/18px 'Noto Sans CJK SC', sans-serif; text-align: center; }
  .fr :global(.dn) { margin: -5px 5px 0 3px; }
  .cursor { position: absolute; left: 167px; top: 20px; }
  .ja { height: 38px; margin-top: 10px; display: flex; align-items: center; padding-left: 6px; font-size: 15.930px; color: #222; }
  .cb { width: 20px; height: 20px; margin-right: 8px; border: 1px solid #6ab82f; border-radius: 2px; display: flex; align-items: center; justify-content: center; }
  .ja small { margin-left: auto; font-size: 14.200px; color: #3158b5; }
  .lm { height: 34px; display: flex; align-items: center; gap: 10px; padding-left: 7px; font-size: 16px; color: #222; }
  .lm :global(.gray) { color: #7b858f; width: 18px; height: 7px; }
  .btns { display: flex; gap: 4px; margin: 15px 0 0 6px; font-size: 13.200px; line-height: 32px; text-align: center; }
  .clear { width: 59px; height: 34px; border: 1px solid #d5e6f3; border-radius: 2px; color: #b5172f; }
  .refine { width: 67px; height: 34px; background: #0b6ecf; color: #fff; border-radius: 2px; font-weight: 500; line-height: 33px; }
  .hr { height: 1px; background: #d5e6f3; margin: 23px 0 10px 6px; }

  main { flex: 1; min-width: 0; display: flex; flex-direction: column; background: #f8fafe; }
  .mh { padding: 5px 15px 23px 18px; height: 279px; flex: none; }
  h1, h2, h3 { margin: 0; font-weight: 400; }
  h1 { font-size: 27.750px; line-height: 58px; height: 58px; }
  .qr { height: 52px; border: solid #d5e6f3; border-width: 1px 0; display: flex; align-items: center; font-size: 16.860px; padding-left: 1px; margin-left: -1px; }
  .qr b, .qf b { font-size: 16.450px; }
  .cnt { color: #3158b5; margin: 0 11px 0 5px; font-size: 16.600px; }
  .eq { margin-right: 11px; }
  s { text-decoration: none; color: #bfc6d1; margin: 0 4.500px; }
  .qr s + s { margin-left: 0; }
  .qr :global(.red) { margin-left: 2px; }
  .qf { height: 50px; margin-bottom: 6px; display: flex; align-items: center; font-size: 16.860px; }
  .qf .pt { margin: 0 4px 0 18px; }
  .qf s { margin-right: 3.500px; }
  .qf i { margin-right: 5px; font-size: 16.600px; }
  .stats { height: 85px; width: 1449px; background: #fff; border: 1px solid #d5e6f3; border-radius: 4px; display: flex; }
  .pg { width: 33px; flex: none; border-left: 1px solid #d5e6f3; display: flex; align-items: center; justify-content: center; color: #2a7fd6; }
  .pg :global(svg) { width: 7px; height: 14px; }
  .pg.off { border-left: 0; border-right: 1px solid #d5e6f3; color: #c2c8d0; }
  .cells { flex: 1; overflow: hidden; display: flex; justify-content: center; padding-top: 12px; }
  .stat { width: 279.200px; height: 56px; flex: none; border-right: 1px solid #d5e6f3; text-align: center; display: flex; flex-direction: column; gap: 6px; }
  .stat:last-child { border: 0; }
  .stat span { font-size: 14.340px; line-height: 20px; }
  .stat strong { font-weight: 400; font-size: 21.130px; line-height: 26px; }

  .tabs { height: 50px; flex: none; display: flex; background: linear-gradient(#f8fafe 2px, #fff 2px); font-size: 16.450px; line-height: 49px; }
  .tab.on { width: 160px; background: #fff; border-top: 3px solid #2b5cbb; border-radius: 2px 2px 0 0; color: #2f63bf; padding-left: 18px; line-height: 43px; }
  .tab.on.lst { width: 86px; display: flex; align-items: center; gap: 4px; }
  .tab.mid, .tab.last { margin-top: 2px; background: #eaeef7; border: 1px solid #d5e6f3; border-radius: 0 0 6px 6px; line-height: 43px; }
  .tab.mid { flex: 1; display: flex; justify-content: space-between; padding: 0 18px; }
  .tb, .tab.last { display: flex; align-items: center; gap: 4px; padding-bottom: 2px; }
  .tab.last { width: 116px; border-right: 0; padding-left: 16px; gap: 5px; border-bottom-right-radius: 0; }

  .tools { height: 43px; flex: none; background: #fff; border-bottom: 1px solid #d5e6f3; display: flex; align-items: center; font-size: 13.340px; padding-left: 31px; }
  .tool { display: flex; align-items: center; gap: 5px; }
  .sortby { margin-left: 16.500px; height: 28px; width: 150px; background: #eaeef7; border-radius: 3px; display: flex; align-items: center; gap: 5px; padding-left: 13px; }

  .body { flex: 1; display: flex; min-height: 0; background: #fff; }
  .left { width: 994px; flex: none; display: flex; flex-direction: column; }
  .results { height: 480px; overflow: hidden; }
  article { display: flex; height: 245px; padding: 26px 0 0 25px; border-bottom: 1px solid #d5e6f3; }
  article.alt { background: #f8fafe; }
  .side { width: 37px; flex: none; color: #2b50b2; padding-top: 5px; }
  .box { display: block; width: 19px; height: 20px; background: #fff; border: 1px solid #d5e6f3; border-radius: 2px; margin-bottom: 18px; }
  .side :global(.ex) { width: 19px; height: 20px; margin-bottom: 19px; }
  .info { font-size: 14.740px; color: #3f4a57; }
  h2 { font-size: 19.660px; line-height: 26px; height: 26px; margin-bottom: 14px; color: #000; }
  .row { height: 26px; line-height: 24px; display: flex; align-items: flex-start; gap: 28.500px; }
  .row > b { font-size: 14.310px; }
  .u { border-bottom: 1px dotted #a9b0b8; height: 24px; line-height: 24px; }
  .src { display: flex; white-space: pre; }
  .oa { display: flex; align-items: center; gap: 5px; }
  .lid, .xid { display: flex; align-items: center; gap: 4px; }
  .lid :global(.lensico) { width: 15px; height: 15px; color: #2377c4; margin-top: 2px; }
  .ids { margin-top: 7px; gap: 28px; }
  .ids .u { height: 26px; padding-bottom: 2px; }
  .xid { gap: 7px; }
  .crossref { gap: 10px; padding-left: 2px; margin-right: -2px; }
  .core, .fire { gap: 9px; }
  .fire { padding-left: 3px; gap: 10px; }
  .tags { margin-top: 8px; height: 24px; gap: 4px; align-items: center; }
  .tag { height: 20px; line-height: 20px; border-radius: 2px; color: #fff; font-size: 11.780px; font-weight: 500; padding: 0 6.500px; display: flex; align-items: center; gap: 4px; }
  .tag :global(svg) { height: 12px; width: auto; }
  .tblue { background: #0395d5; } .torange { background: #e38703; } .tyellow { background: #f5ca05; } .tgreen { background: #77bf4f; } .tgold { background: #dcc56c; }
  .match { margin-top: 16px; gap: 10px; }
  .match i { flex: none; }
  .m1 { margin-left: 24px; }
  footer { flex: 1; border-top: 1px solid #d5e6f3; padding: 13px 0 0 25px; display: flex; gap: 12px; }
  .select { width: 150px; height: 33px; background: #fafbfe; border: 1px solid #d5e6f3; border-radius: 2px; display: flex; align-items: center; justify-content: space-between; padding: 0 14px 0 4px; font-size: 13.340px; }
  .select :global(svg) { color: #76828f; width: 10px; height: 14px; }
  .pager { height: 33px; border: 1px solid #d5e6f3; border-radius: 2px; display: flex; line-height: 32px; font-size: 14px; text-align: center; }
  .pager span { width: 38.700px; border-left: 1px solid #d5e6f3; }
  .pager .w { width: 40.500px; display: flex; align-items: center; justify-content: center; }
  .pager span:first-child { border: 0; }
  .pager .cur { background: #f5f8fd; color: #55b5ec; }

  .right { flex: 1; border-left: 1px solid #d5e6f3; display: flex; flex-direction: column; }
  h3 { font-size: 17.800px; line-height: 26px; padding: 20px 0 8px 13px; height: 54px; }
  .grid { display: grid; grid-template-columns: 114px 113px 114px 113px; grid-template-rows: 162px 167px; margin-left: 18px; width: 454px; }
  .inst { border-right: 1px solid #d5e6f3; padding: 5px 0 0 10px; display: flex; flex-direction: column; font-size: 13.420px; line-height: 20px; }
  .inst:nth-child(4n) { border-right: 0; }
  .inst:nth-child(-n + 4) { border-bottom: 1px solid #d5e6f3; }
  .inst:nth-child(n + 5) { padding-top: 10px; }
  .inst span { margin-top: 5px; }
  .inst:nth-child(n + 5) span { margin-top: 6px; }
  .inst a { font-size: 15.700px; color: #3158b5; margin-top: 5px; }
  .logo { display: block; }
  .lt { font-family: 'Noto Sans CJK SC', sans-serif; }
  .serif { font-family: 'Liberation Serif', serif; }
  .slab { font-family: 'DejaVu Serif', serif; }
  .lib { font-family: 'Liberation Sans', sans-serif; }
  .pub { margin-top: 26px; border-top: 1px solid #d5e6f3; height: 70px; padding-top: 19px; }
  .chart { display: block; }
  .chart text { font: 12px 'Noto Sans CJK SC', sans-serif; fill: #555; }

  .corner { position: absolute; top: 123px; right: 0; width: 408px; height: 42px; }
  .corner svg { display: block; }
  .links { position: absolute; top: 10px; right: 21px; display: flex; gap: 18px; font-size: 12.500px; line-height: 20px; }
  .links span { display: flex; align-items: center; gap: 3px; }
  .links :global(.mg) { color: #1b6fd0; }
  .float { position: absolute; top: 1002px; left: 1721px; display: flex; gap: 6px; color: #fff; font-size: 14.900px; }
  .float span { background: rgba(0, 0, 0, 0.5); height: 38px; display: flex; }
  .fb { width: 116px; gap: 7px; padding: 0 0 0 13px; line-height: 36px; }
  .fb :global(svg) { margin-top: 11px; }
  .upb { width: 50px; justify-content: center; }
  .upb :global(svg) { margin-top: 14px; }
</style>
